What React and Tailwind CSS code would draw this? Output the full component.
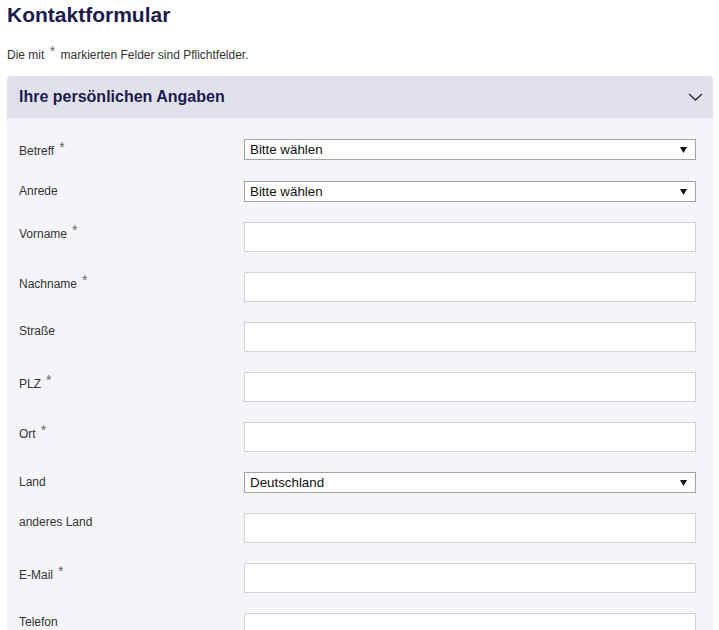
import React from 'react';

const fields = [
  { label: 'Betreff', required: true, type: 'select', value: 'Bitte wählen', row: 'h-[42px]' },
  { label: 'Anrede', type: 'select', value: 'Bitte wählen', row: 'h-[41px]' },
  { label: 'Vorname', required: true, type: 'input', row: 'h-[50px]' },
  { label: 'Nachname', required: true, type: 'input', row: 'h-[50px]' },
  { label: 'Straße', type: 'input', row: 'h-[50px]' },
  { label: 'PLZ', required: true, type: 'input', row: 'h-[50px]' },
  { label: 'Ort', required: true, type: 'input', row: 'h-[50px]' },
  { label: 'Land', type: 'select', value: 'Deutschland', row: 'h-[41px]' },
  { label: 'anderes Land', type: 'input', row: 'h-[50px]' },
  { label: 'E-Mail', required: true, type: 'input', row: 'h-[50px]' },
  { label: 'Telefon', type: 'input', row: 'h-[50px]' },
];

const Star = ({ className = 'ml-[5px]' }) => (
  <span className={`relative -top-[3px] text-[14px] leading-none text-[#666] ${className}`}>*</span>
);

const SelectBox = ({ value }) => (
  <div className="flex h-[21px] flex-1 items-center justify-between border border-[#a3a3a3] bg-white pl-[5px] pr-[8px] text-[13.33px] leading-none text-[#111]">
    <span>{value}</span>
    <svg width="7" height="6" viewBox="0 0 7 6">
      <path d="M0 0 H7 L3.5 6 Z" fill="#111" />
    </svg>
  </div>
);

const App = () => {
  return (
    <div className="min-h-[630px] bg-white pl-[7px] pr-[6px] font-['Liberation_Sans',Arial,sans-serif] text-[#333]">
      <h1 className="pt-px text-[21px] font-bold leading-[28px] text-[#1b1b4d]">Kontaktformular</h1>
      <p className="mt-[18px] text-[12px] leading-4">
        Die mit <Star className="mx-[2px]" /> markierten Felder sind Pflichtfelder.
      </p>

      <div className="mt-[13px] overflow-hidden rounded-t-[4px]">
        {/* Panel header */}
        <div className="flex h-[42px] items-center justify-between bg-[#e1e1eb] pl-3 pr-[10px]">
          <h2 className="text-[16px] font-bold text-[#1b1b4d]">Ihre persönlichen Angaben</h2>
          <svg width="15" height="8" viewBox="0 0 15 8" fill="none">
            <path d="M1 1 L7.5 7 L14 1" stroke="#2a2a4a" strokeWidth="1.4" />
          </svg>
        </div>

        {/* Panel body */}
        <div className="flex flex-col bg-[#f5f5f9] pl-3 pr-[17px] pt-[21px]">
          {fields.map((f) => (
            <div key={f.label} className={`flex items-start ${f.row}`}>
              <label
                className={`w-[225px] shrink-0 text-[12px] leading-4 ${
                  f.required ? 'pt-[4px]' : f.type === 'select' ? 'pt-[2px]' : 'pt-px'
                }`}
              >
                {f.label}
                {f.required && <Star />}
              </label>
              {f.type === 'select' ? (
                <SelectBox value={f.value} />
              ) : (
                <input
                  type="text"
                  className="h-[30px] flex-1 border border-[#d2d2d2] bg-white outline-none"
                />
              )}
            </div>
          ))}
        </div>
      </div>
    </div>
  );
};

export default App;
